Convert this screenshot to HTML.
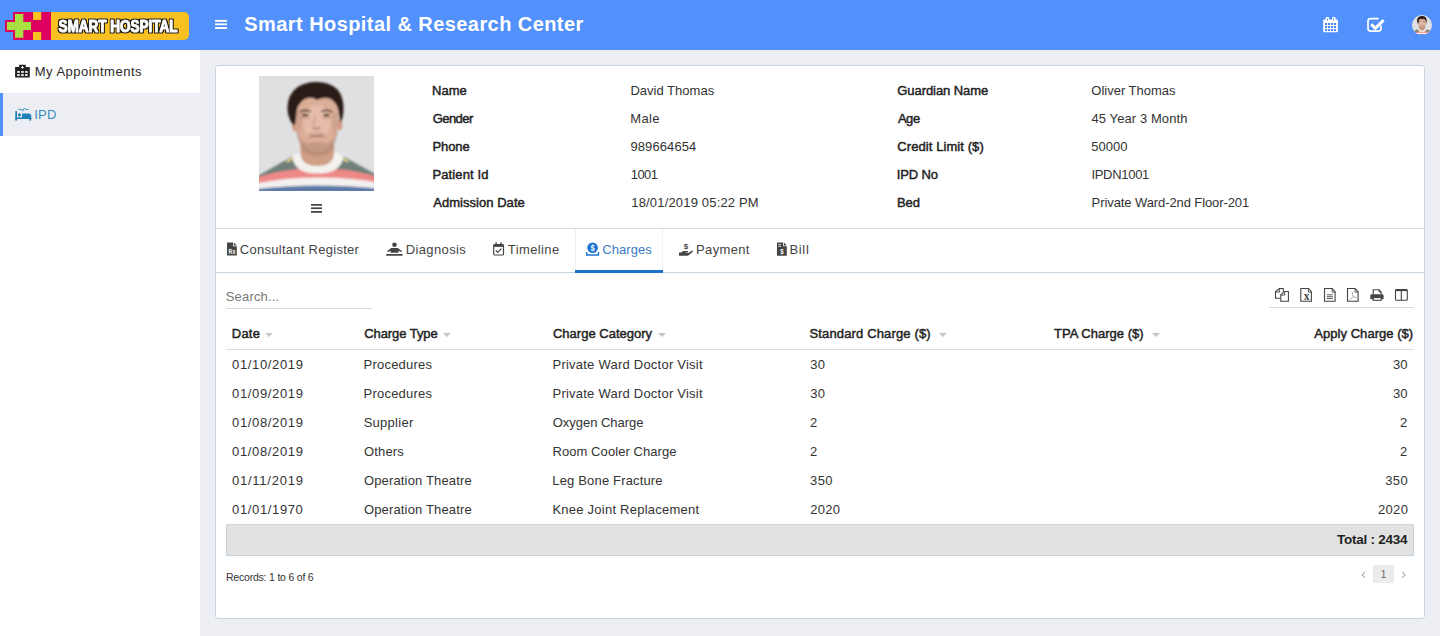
<!DOCTYPE html>
<html lang="en">
<head>
<meta charset="utf-8">
<title>Smart Hospital &amp; Research Center</title>
<style>
*{box-sizing:border-box;margin:0;padding:0}
html,body{width:1440px;height:636px;overflow:hidden}
body{background:#eceef4;font-family:"Liberation Sans",sans-serif;font-size:14px;color:#333;position:relative}
.abs{position:absolute;white-space:nowrap}
#hdr{position:absolute;left:0;top:0;width:1440px;height:50px;background:#5290fc}
#side{position:absolute;left:0;top:50px;width:200px;height:586px;background:#fff}
#act{position:absolute;left:0;top:93px;width:200px;height:43px;background:#eceef4;border-left:3px solid #5290fc}
#card{position:absolute;left:215px;top:65px;width:1210px;height:554px;background:#fff;border:1px solid #c8d5de;border-radius:3px}
.ttl{font-size:20px;line-height:24px;font-weight:bold;color:#fff}
.mi{font-size:13px;line-height:16px;color:#2a2a2a}
.lb{font-size:13px;line-height:16px;color:#222;-webkit-text-stroke:.45px #222}
.vl{font-size:13px;line-height:16px;color:#333}
.tab{font-size:13px;line-height:16px;color:#444}
.th{font-size:13px;line-height:16px;color:#222;-webkit-text-stroke:.45px #222}
.td{font-size:13px;line-height:16px;color:#333}
.tot{font-size:13.5px;line-height:16px;font-weight:bold;color:#222}
.rec{font-size:10.5px;line-height:12px;color:#333}
.pg{font-size:10px;line-height:12px;color:#666}
.hl{position:absolute;height:1px;background:#d5dde5}
.car{position:absolute;width:0;height:0;border-left:4px solid transparent;border-right:4px solid transparent;border-top:4px solid #c6c6c6}
</style>
</head>
<body>
<div id="hdr"></div>
<div id="side"></div>
<div id="act"></div>
<div id="card"></div>
<!-- logo -->
<svg class="abs" style="left:0;top:0" width="200" height="50" viewBox="0 0 200 50">
  <path d="M51 12H184a5 5 0 0 1 5 5V35a5 5 0 0 1-5 5H51z" fill="#f9c021"/>
  <path d="M13 12H51V40H13V32H5V20H13z" fill="#de0061"/>
  <path d="M15 14h8.3v8H31v8h-7.7v7.8H15V30H7v-8h8z" fill="#a9e041"/>
  <rect x="33" y="12" width="8.2" height="8" fill="#f9c021"/>
  <rect x="33" y="32" width="8.2" height="8" fill="#f9c021"/>
  <defs><filter id="ol" x="-5%" y="-30%" width="110%" height="160%"><feMorphology in="SourceAlpha" operator="dilate" radius="1.05" result="d"/><feGaussianBlur in="d" stdDeviation=".35" result="db"/><feFlood flood-color="#2a2416"/><feComposite in2="db" operator="in" result="o"/><feComponentTransfer in="o" result="o2"><feFuncA type="linear" slope="1.6"/></feComponentTransfer><feMerge><feMergeNode in="o2"/><feMergeNode in="SourceGraphic"/></feMerge></filter></defs>
  <text x="118" y="31.7" text-anchor="middle" font-family="Liberation Sans, sans-serif" font-weight="bold" font-size="16.5" textLength="119" lengthAdjust="spacingAndGlyphs" fill="#fff" stroke="#fff" stroke-width=".7" stroke-linejoin="round" filter="url(#ol)">SMART HOSPITAL</text>
</svg>
<!-- lines -->
<div class="hl" style="left:216px;top:228px;width:1208px;background:#dbdbdb"></div>
<div class="hl" style="left:216px;top:272px;width:1208px;background:#c9d6e2"></div>
<div class="abs" style="left:575px;top:229px;width:88px;height:41px;border-left:1px solid #f0f0f0;border-right:1px solid #f0f0f0"></div>
<div class="abs" style="left:575px;top:270px;width:88px;height:3px;background:#1f72c9"></div>
<div class="hl" style="left:226px;top:308px;width:146px;background:#d9d9d9"></div>
<div class="hl" style="left:1269px;top:307px;width:145px;background:#d9d9d9"></div>
<div class="hl" style="left:226px;top:349px;width:1188px;background:#dcdcdc"></div>
<div class="abs" style="left:226px;top:524px;width:1188px;height:32px;background:#e2e2e2;border:1px solid #c5d3de;border-top-color:#d6d6d6"></div>
<div class="abs" style="left:1373px;top:565px;width:21px;height:18px;background:#ebebeb"></div>
<!-- carets -->
<div class="car" style="left:264.5px;top:332.5px"></div>
<div class="car" style="left:443px;top:332.5px"></div>
<div class="car" style="left:658px;top:332.5px"></div>
<div class="car" style="left:938.5px;top:332.5px"></div>
<div class="car" style="left:1151.5px;top:332.5px"></div>
<svg class="abs" style="left:259px;top:76px" width="115" height="115" viewBox="0 0 115 115"><defs><filter id="pb" x="-5%" y="-5%" width="110%" height="110%"><feGaussianBlur stdDeviation="0.9"/></filter></defs>
<rect width="115" height="115" fill="#e0e0e3"/>
<g filter="url(#pb)">
<!-- torso -->
<path d="M-3 101L33 80.500L58 77L84.500 80.500L118 99V118H-3z" fill="#6f8079"/>
<path d="M36 79.500l-9 5.500l1.500 1.500l9.500-5.500zM81 79.500l9 5.500l-1.500 1.500l-9.500-5.500z" fill="#e6cf86"/>
<path d="M-3 102Q20 93 58 92Q96 93 118 101V118H-3z" fill="#ee8988"/>
<path d="M-3 107.500Q25 101.500 58 101.500Q92 101.500 118 106.500V118H-3z" fill="#f3f1ef"/>
<path d="M-3 113Q28 109.500 58 109.500Q90 109.500 118 112.500V118H-3z" fill="#5d79a6"/>
<!-- collar -->
<path d="M33.500 79.500Q34 97.500 58.500 97.500Q83 97.500 84.500 79.500L76 76H42z" fill="#f3f2ef"/>
<!-- neck -->
<path d="M41.500 60V79Q44 90 58.500 90Q73 90 75 79V60z" fill="#cf9f86"/>
<path d="M42 66Q58 84 75 66V74Q58 88 42 74z" fill="#b98a72" opacity=".6"/>
<!-- ears -->
<ellipse cx="35.700" cy="50" rx="2.600" ry="5.500" fill="#d09a80"/><ellipse cx="80.600" cy="49" rx="2.600" ry="5.500" fill="#d09a80"/>
<!-- face -->
<path d="M36.500 30Q36 47 38 57Q41 67.500 48.500 73.500Q58 79 67.500 73.500Q75 67.500 78 57Q80 47 79.500 30Q70 16 58 17Q45 16 36.500 30z" fill="#dcae98"/>
<ellipse cx="58" cy="46" rx="14" ry="17" fill="#e8c2b0" opacity=".7"/>
<path d="M37 36Q37 50 39 58L43 50L42 38zM79 36Q79 50 77 58L73 50L74 38z" fill="#c39a86" opacity=".6"/>
<!-- stubble -->
<path d="M37.800 54Q41 66 49 68Q58 64 67 68Q75 66 78.200 54Q79 62 74.500 69Q67 78 58 78Q49 78 41.500 69Q37 62 37.800 54z" fill="#a98470" opacity=".5"/>
<path d="M50 57.500Q58 54.500 66 57.500L67 63Q58 60 49 63z" fill="#b58f7b" opacity=".4"/>
<!-- mouth, nose, eyes -->
<path d="M51.500 59.800Q58 61 64 59.600" stroke="#9b5a55" stroke-width="1.300" fill="none"/>
<path d="M53.500 51.500Q57.500 54 61.500 51.500" stroke="#b07f6c" stroke-width="1.600" fill="none"/>
<path d="M56 40Q55 47 54 50" stroke="#c99984" stroke-width="1.400" fill="none"/>
<ellipse cx="46.200" cy="39.200" rx="3.300" ry="1.400" fill="#4a3a36"/><ellipse cx="67.500" cy="39.200" rx="3.300" ry="1.400" fill="#4a3a36"/>
<path d="M40.500 36Q46 33 51.500 35.500M62.500 35.500Q68 33 73.500 36" stroke="#4b342b" stroke-width="1.700" fill="none"/>
<path d="M41 41.500Q46 43.500 51 41.500M63 41.500Q68 43.500 73 41.500" stroke="#c08f7c" stroke-width="1.200" fill="none"/>
<!-- hair -->
<path d="M34 49Q28 40 28.500 31Q29 18 38 11.500Q47 5.500 58 6Q70 6 78 13Q84.500 20 84.500 32Q84.500 42 81.500 47Q80 41 79.500 35Q78 27 71 22.500Q63 21 58 24Q52 20 45 23.500Q38 29 37.500 37Q37 44 36 49z" fill="#2b1d18"/>
</g>
</svg>
<svg class="abs" style="left:1412px;top:14.700px;border-radius:50%" width="20" height="20" viewBox="0 0 115 115">
<defs><filter id="pb2"><feGaussianBlur stdDeviation="1.6"/></filter></defs><rect width="115" height="115" fill="#e0e0e3"/>
<g filter="url(#pb2)">
<!-- torso -->
<path d="M-3 101L33 80.500L58 77L84.500 80.500L118 99V118H-3z" fill="#6f8079"/>
<path d="M36 79.500l-9 5.500l1.500 1.500l9.500-5.500zM81 79.500l9 5.500l-1.500 1.500l-9.500-5.500z" fill="#e6cf86"/>
<path d="M-3 102Q20 93 58 92Q96 93 118 101V118H-3z" fill="#ee8988"/>
<path d="M-3 107.500Q25 101.500 58 101.500Q92 101.500 118 106.500V118H-3z" fill="#f3f1ef"/>
<path d="M-3 113Q28 109.500 58 109.500Q90 109.500 118 112.500V118H-3z" fill="#5d79a6"/>
<!-- collar -->
<path d="M33.500 79.500Q34 97.500 58.500 97.500Q83 97.500 84.500 79.500L76 76H42z" fill="#f3f2ef"/>
<!-- neck -->
<path d="M41.500 60V79Q44 90 58.500 90Q73 90 75 79V60z" fill="#cf9f86"/>
<path d="M42 66Q58 84 75 66V74Q58 88 42 74z" fill="#b98a72" opacity=".6"/>
<!-- ears -->
<ellipse cx="35.700" cy="50" rx="2.600" ry="5.500" fill="#d09a80"/><ellipse cx="80.600" cy="49" rx="2.600" ry="5.500" fill="#d09a80"/>
<!-- face -->
<path d="M36.500 30Q36 47 38 57Q41 67.500 48.500 73.500Q58 79 67.500 73.500Q75 67.500 78 57Q80 47 79.500 30Q70 16 58 17Q45 16 36.500 30z" fill="#dcae98"/>
<ellipse cx="58" cy="46" rx="14" ry="17" fill="#e8c2b0" opacity=".7"/>
<path d="M37 36Q37 50 39 58L43 50L42 38zM79 36Q79 50 77 58L73 50L74 38z" fill="#c39a86" opacity=".6"/>
<!-- stubble -->
<path d="M37.800 54Q41 66 49 68Q58 64 67 68Q75 66 78.200 54Q79 62 74.500 69Q67 78 58 78Q49 78 41.500 69Q37 62 37.800 54z" fill="#a98470" opacity=".5"/>
<path d="M50 57.500Q58 54.500 66 57.500L67 63Q58 60 49 63z" fill="#b58f7b" opacity=".4"/>
<!-- mouth, nose, eyes -->
<path d="M51.500 59.800Q58 61 64 59.600" stroke="#9b5a55" stroke-width="1.300" fill="none"/>
<path d="M53.500 51.500Q57.500 54 61.500 51.500" stroke="#b07f6c" stroke-width="1.600" fill="none"/>
<path d="M56 40Q55 47 54 50" stroke="#c99984" stroke-width="1.400" fill="none"/>
<ellipse cx="46.200" cy="39.200" rx="3.300" ry="1.400" fill="#4a3a36"/><ellipse cx="67.500" cy="39.200" rx="3.300" ry="1.400" fill="#4a3a36"/>
<path d="M40.500 36Q46 33 51.500 35.500M62.500 35.500Q68 33 73.500 36" stroke="#4b342b" stroke-width="1.700" fill="none"/>
<path d="M41 41.500Q46 43.500 51 41.500M63 41.500Q68 43.500 73 41.500" stroke="#c08f7c" stroke-width="1.200" fill="none"/>
<!-- hair -->
<path d="M34 49Q28 40 28.500 31Q29 18 38 11.500Q47 5.500 58 6Q70 6 78 13Q84.500 20 84.500 32Q84.500 42 81.500 47Q80 41 79.500 35Q78 27 71 22.500Q63 21 58 24Q52 20 45 23.500Q38 29 37.500 37Q37 44 36 49z" fill="#2b1d18"/>
</g>
</svg>

<svg class="abs" style="left:0;top:0" width="1440" height="636" viewBox="0 0 1440 636" font-family="Liberation Sans, sans-serif">
<!-- header hamburger -->
<g fill="#fff"><rect x="215" y="19.9" width="12" height="1.9"/><rect x="215" y="23.4" width="12" height="1.8"/><rect x="215" y="27.1" width="12" height="1.9"/></g>
<!-- header calendar -->
<g>
<path d="M1323.2 20.4a1 1 0 0 1 1-1h1.4v-1.4a1.1 1.1 0 0 1 1.1-1.1h1.3a1.1 1.1 0 0 1 1.1 1.1v1.4h3v-1.4a1.1 1.1 0 0 1 1.1-1.1h1.3a1.1 1.1 0 0 1 1.1 1.1v1.4h1.3a1 1 0 0 1 1 1v10.8a1 1 0 0 1-1 1h-12.7a1 1 0 0 1-1-1z" fill="#fff"/>
<g fill="#4a86f6"><rect x="1325" y="23" width="2.1" height="2"/><rect x="1328" y="23" width="2.1" height="2"/><rect x="1331" y="23" width="2.1" height="2"/><rect x="1334" y="23" width="2.1" height="2"/>
<rect x="1325" y="26" width="2.1" height="2"/><rect x="1328" y="26" width="2.1" height="2"/><rect x="1331" y="26" width="2.1" height="2"/><rect x="1334" y="26" width="2.1" height="2"/>
<rect x="1325" y="29" width="2.1" height="2"/><rect x="1328" y="29" width="2.1" height="2"/><rect x="1331" y="29" width="2.1" height="2"/><rect x="1334" y="29" width="2.1" height="2"/>
<rect x="1327" y="18.2" width=".9" height="2.6" rx=".45"/><rect x="1333.2" y="18.2" width=".9" height="2.6" rx=".45"/></g>
</g>
<!-- header check-square -->
<path d="M1378.6 18.6h-8a2.6 2.6 0 0 0-2.6 2.6v7.4a2.6 2.6 0 0 0 2.6 2.6h7.8a2.6 2.6 0 0 0 2.6-2.6v-3.2" fill="none" stroke="#fff" stroke-width="1.7"/>
<path d="M1371.2 24.3l4.1 4.1l8.3-8.3" fill="none" stroke="#fff" stroke-width="3"/>
<!-- sidebar hospital -->
<g>
<path d="M19.1 64.7h6.7v2.4h4v10.3H15.1V67.1h4z" fill="#222"/>
<g fill="#fff"><rect x="17.2" y="71.1" width="2.6" height="1.7"/><rect x="21.1" y="71.1" width="2.7" height="1.7"/><rect x="25.1" y="71.1" width="2.6" height="1.7"/><rect x="17.2" y="74.2" width="2.6" height="1.7"/><rect x="21.1" y="74.2" width="2.7" height="1.7"/><rect x="25.1" y="74.2" width="2.6" height="1.7"/>
<path d="M22 66.1h.9v.9h.9v.9h-.9v.9H22v-.9h-.9V67H22z"/></g>
</g>
<!-- sidebar bed -->
<g fill="#2180b5">
<rect x="15.3" y="111.1" width="1.7" height="9.5"/><rect x="15.3" y="117.4" width="15.9" height="1.6"/><rect x="29.4" y="117.4" width="1.8" height="3.2"/>
<path d="M22 113.400h6.600a2.600 2.600 0 0 1 2.600 2.600v2.400H22z"/><circle cx="19.4" cy="114.9" r="1.55"/>
<path d="M18.2 109.4h3.4l.9 1.7l1.9-3.1l.8 1.4h3.6" fill="none" stroke="#2180b5" stroke-width=".8"/>
</g>
<!-- photo hamburger -->
<g fill="#444"><rect x="311" y="204" width="11" height="1.7"/><rect x="311" y="207.4" width="11" height="1.7"/><rect x="311" y="211" width="11" height="1.8"/></g>
<!-- tab: consultant register (file-prescription) -->
<g>
<path d="M227 242.6h6.1v3.6h3.7v9.4H227z M233.9 242.6l2.9 2.9h-2.9z" fill="#444"/>
<text x="228.600" y="254" font-size="7.500" font-weight="bold" fill="#fff" textLength="6.800" lengthAdjust="spacingAndGlyphs">Rx</text>
</g>
<!-- tab: diagnosis -->
<g fill="#444">
<circle cx="394.5" cy="244.8" r="2.3"/>
<path d="M392 248h5c2 0 3 2.200 4.700 2.700v1.200c-1.400 0-2.400-.6-3.200-1.300v2.200h-8v-2.200c-.8.700-1.800 1.300-3.200 1.300v-1.200c1.700-.5 2.700-2.700 4.700-2.700z"/>
<rect x="386.100" y="254.100" width="16.600" height="1.600" rx=".4"/>
</g>
<!-- tab: timeline (calendar-check) -->
<g fill="none" stroke="#444">
<rect x="493.700" y="244.600" width="9.800" height="10.400" rx="1.100" stroke-width="1.150"/>
<path d="M493.700 245.700h9.800" stroke-width="2.300"/>
<path d="M496.100 242.300v2.300M500.900 242.300v2.300" stroke-width="1.300"/>
<path d="M495.900 250.500l1.800 1.800l3.600-3.700" stroke-width="1.200"/>
</g>
<!-- tab: charges (donate) -->
<g>
<circle cx="592.600" cy="247.800" r="5.300" fill="#1f73d3"/>
<path d="M586 251.900h1.400v2.300h10.400v-2.300h1.400v3.900h-13.200z" fill="#1f73d3"/>
<text x="590.700" y="250.900" font-size="8.500" font-weight="bold" fill="#fff" textLength="3.800" lengthAdjust="spacingAndGlyphs">$</text>
</g>
<!-- tab: payment (hand-holding-usd) -->
<g fill="#444">
<path d="M679 252.400h2.400l1.600-1.300h4.700q1 .6 0 1.300l-2.800.3v.4h3.400l3.300-2.300q1.300-.4 1.400.6l-4.300 3.900q-.5.400-1.200.4h-8.500z"/>
<text x="686.100" y="248.900" font-size="8" font-weight="bold" text-anchor="middle">$</text>
</g>
<!-- tab: bill (file-invoice-dollar) -->
<g>
<path d="M777 242.600h6.100v3.600h3.700v9.500H777z M783.900 242.600l2.900 2.900h-2.900z" fill="#444"/>
<path d="M778.300 244.600h2.700M778.300 246.400h2.700" stroke="#fff" stroke-width=".8"/>
<text x="780.200" y="254.100" font-size="7.500" font-weight="bold" fill="#fff" textLength="3.400" lengthAdjust="spacingAndGlyphs">$</text>
</g>
<!-- toolbar: files-o -->
<g fill="none" stroke="#444" stroke-width="1.100">
<path d="M1280.300 298.300h-4.800v-6.500l3.800-3.300h4v3"/><path d="M1279.600 288.500v3.500h-4.100" stroke-width=".9"/>
<path d="M1280.800 301.200v-6.400l3.700-3.300h3.900v9.700z" fill="#fff"/><path d="M1284.700 291.500v3.600h-3.900" stroke-width=".9"/>
</g>
<!-- toolbar: file-excel-o -->
<g fill="none" stroke="#444" stroke-width="1.100">
<path d="M1300.800 288.500h7.700l2.900 3.200v9.500h-10.600z"/><path d="M1308.400 288.500v3.600h3" stroke-width=".9"/>
</g>
<text x="1306.500" y="299.900" font-size="11.500" font-weight="bold" font-family="Liberation Serif, serif" fill="#444" text-anchor="middle">x</text>
<!-- toolbar: file-text-o -->
<g fill="none" stroke="#444" stroke-width="1.100">
<path d="M1324.500 288.500h7.700l2.900 3.200v9.500h-10.600z"/><path d="M1332.100 288.500v3.600h3" stroke-width=".9"/>
<path d="M1326.800 294.800h6M1326.800 296.700h6M1326.800 298.600h6" stroke-width=".9"/>
</g>
<!-- toolbar: file-pdf-o -->
<g fill="none" stroke="#444" stroke-width="1.100">
<path d="M1347.500 288.500h7.700l2.900 3.200v9.500h-10.600z"/><path d="M1355.100 288.500v3.600h3" stroke-width=".9"/>
<path d="M1352.200 291.800c.1 2 .4 3.500 1.100 4.700c-1 1.400-2.400 2.600-3.900 3.300M1353.300 296.500c1 .7 2.200 1 3.400 1" stroke="#777" stroke-width=".6"/>
</g>
<!-- toolbar: print -->
<g>
<path d="M1373.200 294.500v-4.700h5.800l2.200 2.200v2.500" fill="#fff" stroke="#444" stroke-width="1.100"/><path d="M1379 289.800v2.300h2.200" fill="none" stroke="#444" stroke-width=".8"/>
<path d="M1370.300 295.700a1.400 1.400 0 0 1 1.400-1.400h10.500a1.400 1.400 0 0 1 1.400 1.400v3.600h-13.300z" fill="#444"/>
<rect x="1373.200" y="297.600" width="8" height="2.700" fill="#fff" stroke="#444" stroke-width="1.100"/>
</g>
<!-- toolbar: columns -->
<g fill="none" stroke="#444">
<rect x="1395.500" y="289.500" width="11.800" height="10.800" rx="1" stroke-width="1.100"/>
<path d="M1395.500 290.200h11.800" stroke-width="1.800"/><path d="M1401.300 290v10.300" stroke-width="1.100"/>
</g>
<!-- pagination chevrons -->
<path d="M1365 572.200l-3 2.700l3 2.700M1402.300 572.200l3 2.700l-3 2.700" fill="none" stroke="#8a8f99" stroke-width="1"/>
</svg>

<header>
<div id="t0" class="abs ttl" style="left:244.32px;top:12.07px;letter-spacing:0.429px">Smart Hospital &amp; Research Center</div>
</header>
<aside>
<div id="t1" class="abs mi" style="left:34.69px;top:63.50px;letter-spacing:0.510px">My Appointments</div>
<div id="t2" class="abs mi" style="left:34.37px;top:106.50px;letter-spacing:0.120px;color:#3c8dbc">IPD</div>
</aside>
<section>
<div id="t3" class="abs lb" style="left:432.12px;top:82.50px;letter-spacing:0.012px">Name</div>
<div id="t4" class="abs vl" style="left:630.41px;top:82.50px;letter-spacing:0.014px">David Thomas</div>
<div id="t5" class="abs lb" style="left:432.65px;top:110.50px;letter-spacing:-0.540px">Gender</div>
<div id="t6" class="abs vl" style="left:630.36px;top:110.50px;letter-spacing:0.293px">Male</div>
<div id="t7" class="abs lb" style="left:432.42px;top:138.50px;letter-spacing:-0.073px">Phone</div>
<div id="t8" class="abs vl" style="left:630.38px;top:138.50px;letter-spacing:0.111px">989664654</div>
<div id="t9" class="abs lb" style="left:432.41px;top:166.50px;letter-spacing:0.119px">Patient Id</div>
<div id="t10" class="abs vl" style="left:630.80px;top:166.50px;letter-spacing:-0.600px">1001</div>
<div id="t11" class="abs lb" style="left:433.28px;top:194.50px;letter-spacing:0.035px">Admission Date</div>
<div id="t12" class="abs vl" style="left:631.29px;top:194.50px;letter-spacing:0.171px">18/01/2019 05:22 PM</div>
<div id="t13" class="abs lb" style="left:897.29px;top:82.50px;letter-spacing:-0.067px">Guardian Name</div>
<div id="t14" class="abs vl" style="left:1091.29px;top:82.50px">Oliver Thomas</div>
<div id="t15" class="abs lb" style="left:897.88px;top:110.50px;letter-spacing:-0.445px">Age</div>
<div id="t16" class="abs vl" style="left:1091.52px;top:110.50px;letter-spacing:0.085px">45 Year 3 Month</div>
<div id="t17" class="abs lb" style="left:897.36px;top:138.50px;letter-spacing:0.076px">Credit Limit ($)</div>
<div id="t18" class="abs vl" style="left:1091.33px;top:138.50px;letter-spacing:0.030px">50000</div>
<div id="t19" class="abs lb" style="left:896.80px;top:166.50px;letter-spacing:-0.120px">IPD No</div>
<div id="t20" class="abs vl" style="left:1091.38px;top:166.50px;letter-spacing:-0.289px">IPDN1001</div>
<div id="t21" class="abs lb" style="left:896.97px;top:194.50px;letter-spacing:-0.106px">Bed</div>
<div id="t22" class="abs vl" style="left:1091.62px;top:194.50px;letter-spacing:-0.093px">Private Ward-2nd Floor-201</div>
</section>
<nav>
<div id="t23" class="abs tab" style="left:239.82px;top:241.50px;letter-spacing:0.273px">Consultant Register</div>
<div id="t24" class="abs tab" style="left:405.72px;top:241.50px;letter-spacing:0.375px">Diagnosis</div>
<div id="t25" class="abs tab" style="left:507.80px;top:241.50px;letter-spacing:0.399px">Timeline</div>
<div id="t26" class="abs tab" style="left:602.22px;top:241.50px;letter-spacing:0.069px;color:#3c7cc4">Charges</div>
<div id="t27" class="abs tab" style="left:696.10px;top:241.50px;letter-spacing:0.347px">Payment</div>
<div id="t28" class="abs tab" style="left:789.52px;top:241.50px;letter-spacing:0.642px">Bill</div>
<div id="t29" class="abs tab" style="left:225.77px;top:288.50px;letter-spacing:0.170px;color:#777">Search...</div>
</nav>
<main>
<div id="t30" class="abs th" style="left:231.85px;top:325.50px;letter-spacing:0.184px">Date</div>
<div id="t31" class="abs th" style="left:364.16px;top:325.50px;letter-spacing:-0.060px">Charge Type</div>
<div id="t32" class="abs th" style="left:552.97px;top:325.50px;letter-spacing:0.006px">Charge Category</div>
<div id="t33" class="abs th" style="left:809.56px;top:325.50px;letter-spacing:0.144px">Standard Charge ($)</div>
<div id="t34" class="abs th" style="left:1054.02px;top:325.50px;letter-spacing:0.020px">TPA Charge ($)</div>
<div id="t35" class="abs th" style="left:1314.34px;top:325.50px;letter-spacing:0.038px">Apply Charge ($)</div>
<div id="t36" class="abs td" style="left:232.08px;top:356.50px;letter-spacing:0.638px">01/10/2019</div>
<div id="t37" class="abs td" style="left:363.61px;top:356.50px;letter-spacing:0.199px">Procedures</div>
<div id="t38" class="abs td" style="left:552.50px;top:356.50px;letter-spacing:0.232px">Private Ward Doctor Visit</div>
<div id="t39" class="abs td" style="left:810.21px;top:356.50px;letter-spacing:0.290px">30</div>
<div id="t40" class="abs td" style="left:1392.90px;top:356.50px;letter-spacing:0.222px">30</div>
<div id="t41" class="abs td" style="left:232.05px;top:385.50px;letter-spacing:0.641px">01/09/2019</div>
<div id="t42" class="abs td" style="left:363.61px;top:385.50px;letter-spacing:0.199px">Procedures</div>
<div id="t43" class="abs td" style="left:552.50px;top:385.50px;letter-spacing:0.232px">Private Ward Doctor Visit</div>
<div id="t44" class="abs td" style="left:810.21px;top:385.50px;letter-spacing:0.290px">30</div>
<div id="t45" class="abs td" style="left:1392.90px;top:385.50px;letter-spacing:0.222px">30</div>
<div id="t46" class="abs td" style="left:232.08px;top:414.50px;letter-spacing:0.640px">01/08/2019</div>
<div id="t47" class="abs td" style="left:363.66px;top:414.50px;letter-spacing:0.268px">Supplier</div>
<div id="t48" class="abs td" style="left:552.71px;top:414.50px;letter-spacing:-0.023px">Oxygen Charge</div>
<div id="t49" class="abs td" style="left:810.11px;top:414.50px">2</div>
<div id="t50" class="abs td" style="left:1400.11px;top:414.50px">2</div>
<div id="t51" class="abs td" style="left:232.08px;top:443.50px;letter-spacing:0.640px">01/08/2019</div>
<div id="t52" class="abs td" style="left:363.97px;top:443.50px;letter-spacing:0.153px">Others</div>
<div id="t53" class="abs td" style="left:552.45px;top:443.50px;letter-spacing:0.076px">Room Cooler Charge</div>
<div id="t54" class="abs td" style="left:810.11px;top:443.50px">2</div>
<div id="t55" class="abs td" style="left:1400.11px;top:443.50px">2</div>
<div id="t56" class="abs td" style="left:232.04px;top:472.50px;letter-spacing:0.749px">01/11/2019</div>
<div id="t57" class="abs td" style="left:363.94px;top:472.50px;letter-spacing:0.152px">Operation Theatre</div>
<div id="t58" class="abs td" style="left:552.30px;top:472.50px;letter-spacing:0.164px">Leg Bone Fracture</div>
<div id="t59" class="abs td" style="left:810.07px;top:472.50px;letter-spacing:0.365px">350</div>
<div id="t60" class="abs td" style="left:1385.35px;top:472.50px;letter-spacing:0.286px">350</div>
<div id="t61" class="abs td" style="left:232.10px;top:501.50px;letter-spacing:0.631px">01/01/1970</div>
<div id="t62" class="abs td" style="left:363.94px;top:501.50px;letter-spacing:0.152px">Operation Theatre</div>
<div id="t63" class="abs td" style="left:552.41px;top:501.50px;letter-spacing:0.240px">Knee Joint Replacement</div>
<div id="t64" class="abs td" style="left:810.18px;top:501.50px;letter-spacing:0.285px">2020</div>
<div id="t65" class="abs td" style="left:1377.98px;top:501.50px;letter-spacing:0.323px">2020</div>
<div id="t66" class="abs tot" style="left:1337.00px;top:532.32px;letter-spacing:-0.255px">Total : 2434</div>
</main>
<footer>
<div id="t67" class="abs rec" style="left:225.96px;top:571.36px;letter-spacing:-0.204px">Records: 1 to 6 of 6</div>
<div id="t68" class="abs pg" style="left:1380.68px;top:568.53px">1</div>
</footer>
</body>
</html>
